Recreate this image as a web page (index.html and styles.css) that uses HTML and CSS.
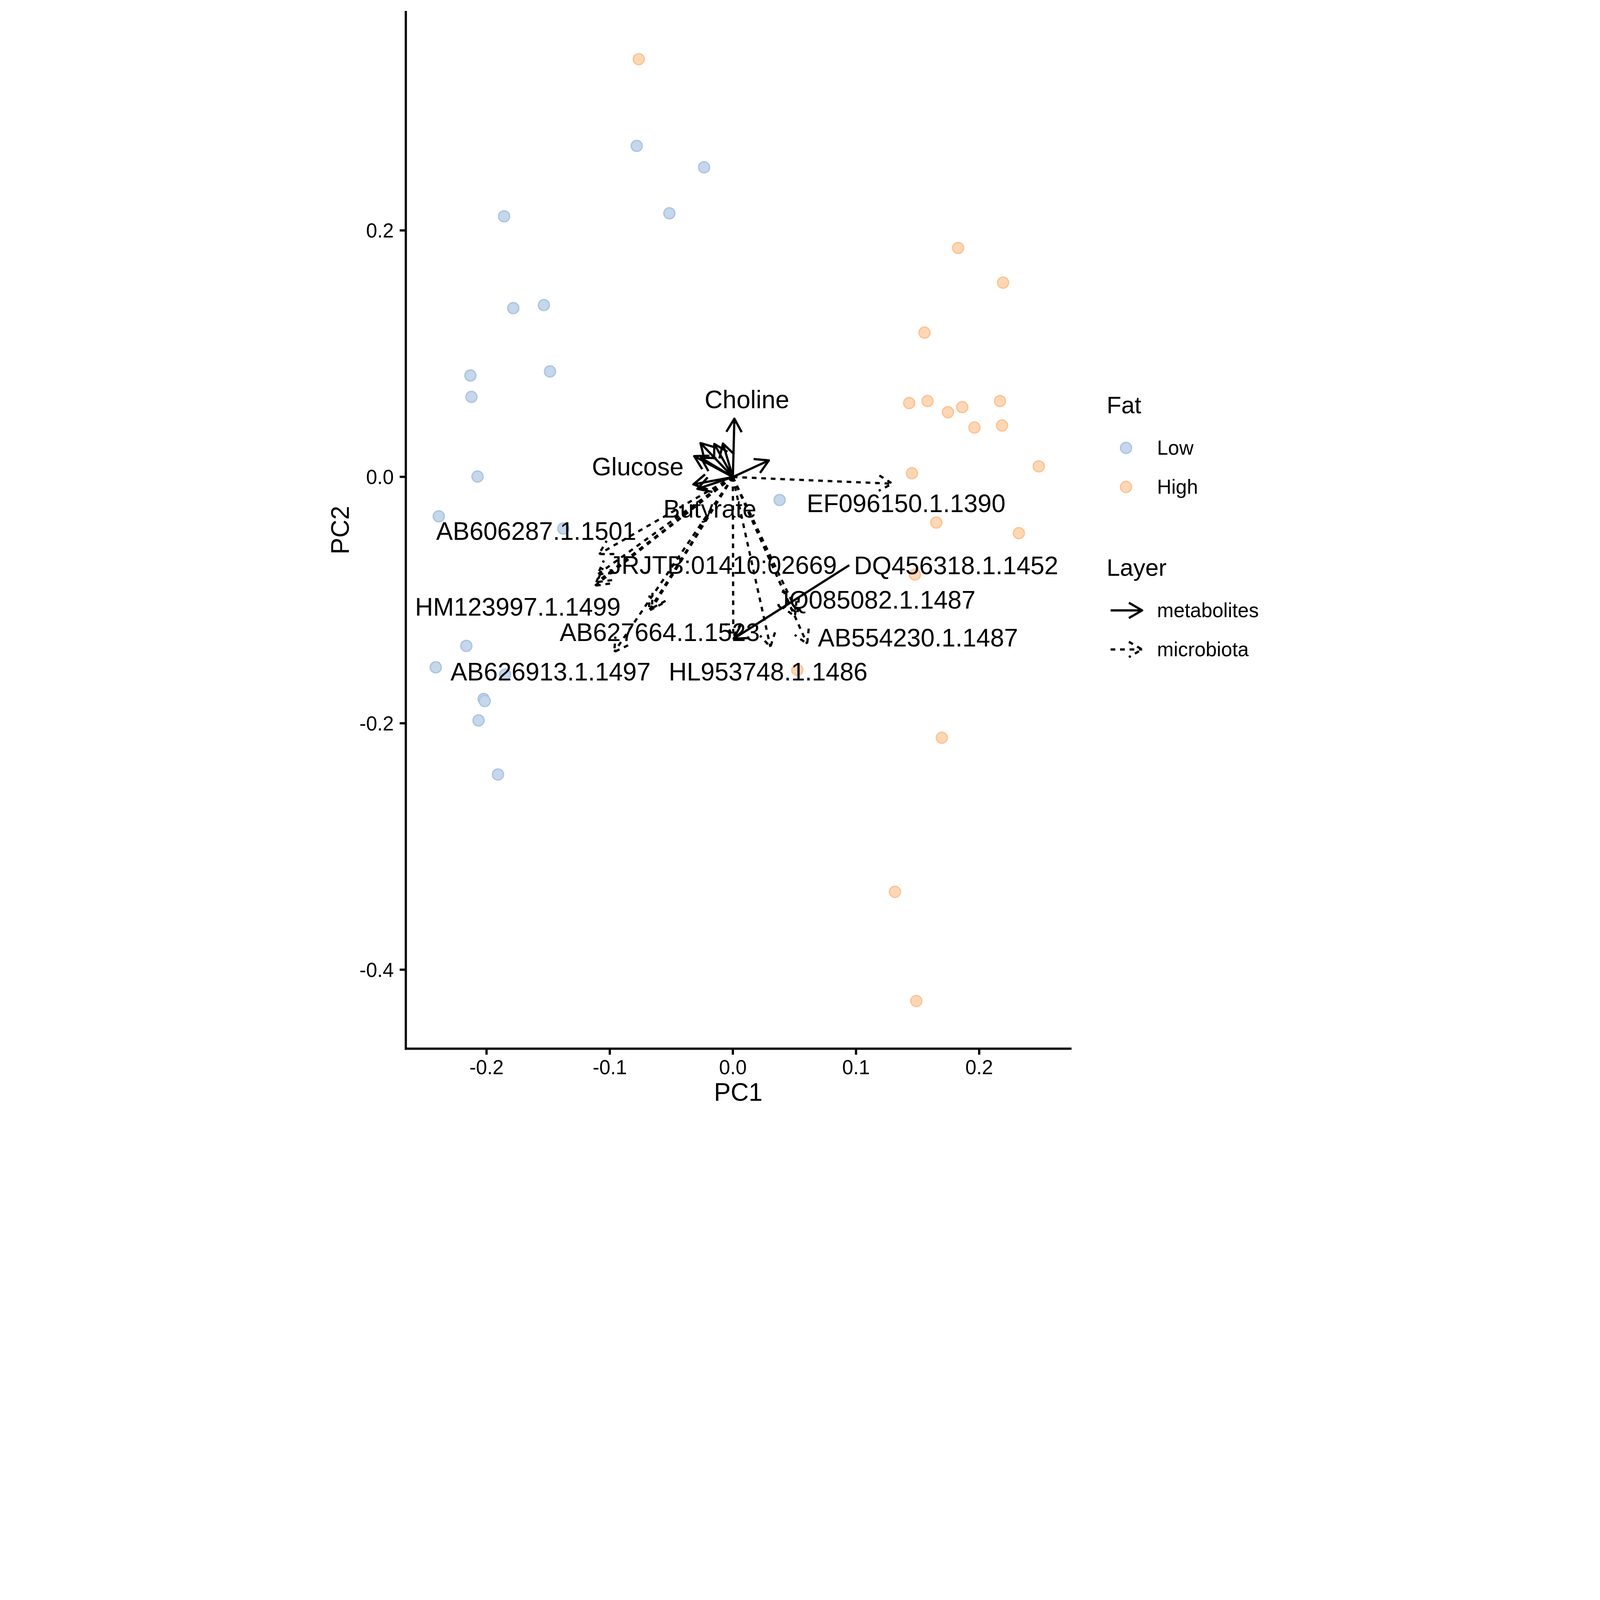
FILE: index.html
```html
<!DOCTYPE html>
<html>
<head>
<meta charset="utf-8">
<title>PCA biplot</title>
<link rel="stylesheet" href="styles.css">
</head>
<body>
<div class="figure">
  <svg class="plot" viewBox="0 0 1070 1097.6" xmlns="http://www.w3.org/2000/svg">
    <defs>
      <marker id="hs" markerUnits="userSpaceOnUse" markerWidth="40" markerHeight="40" viewBox="0 0 40 40" refX="20" refY="20" orient="auto">
        <path class="head" d="M7,12.5 L20,20 L7,27.5"/>
      </marker>
      <marker id="hd" markerUnits="userSpaceOnUse" markerWidth="40" markerHeight="40" viewBox="0 0 40 40" refX="20" refY="20" orient="auto">
        <path class="head dashed" d="M7,12.5 L20,20 L7,27.5"/>
      </marker>
    </defs>

    <!-- axes -->
    <line class="axis" x1="397.7" y1="10.7" x2="397.7" y2="1028.8"/>
    <line class="axis" x1="396.6" y1="1027.7" x2="1050.1" y2="1027.7"/>
    <g class="ticks">
      <line x1="476.8" y1="1027.7" x2="476.8" y2="1033.6"/>
      <line x1="597.6" y1="1027.7" x2="597.6" y2="1033.6"/>
      <line x1="718.2" y1="1027.7" x2="718.2" y2="1033.6"/>
      <line x1="838.9" y1="1027.7" x2="838.9" y2="1033.6"/>
      <line x1="959.6" y1="1027.7" x2="959.6" y2="1033.6"/>
      <line x1="391.7" y1="225.8" x2="397.7" y2="225.8"/>
      <line x1="391.7" y1="467.3" x2="397.7" y2="467.3"/>
      <line x1="391.7" y1="708.8" x2="397.7" y2="708.8"/>
      <line x1="391.7" y1="950.3" x2="397.7" y2="950.3"/>
    </g>
    <g class="tick-label x">
      <text x="476.8" y="1052.7">-0.2</text>
      <text x="597.6" y="1052.7">-0.1</text>
      <text x="718.2" y="1052.7">0.0</text>
      <text x="838.9" y="1052.7">0.1</text>
      <text x="959.6" y="1052.7">0.2</text>
    </g>
    <g class="tick-label y">
      <text x="385.9" y="232.8">0.2</text>
      <text x="385.9" y="474.3">0.0</text>
      <text x="385.9" y="715.8">-0.2</text>
      <text x="385.9" y="957.3">-0.4</text>
    </g>
    <text class="axis-title" x="723.5" y="1078.9">PC1</text>
    <text class="axis-title" transform="translate(341.9,519.5) rotate(-90)">PC2</text>

    <!-- points: Low -->
    <g class="pt low">
      <circle cx="624" cy="143" r="5.4"/>
      <circle cx="690" cy="164" r="5.4"/>
      <circle cx="656" cy="209" r="5.4"/>
      <circle cx="494" cy="212" r="5.4"/>
      <circle cx="503" cy="302" r="5.4"/>
      <circle cx="533" cy="299" r="5.4"/>
      <circle cx="539" cy="364" r="5.4"/>
      <circle cx="461" cy="368" r="5.4"/>
      <circle cx="462" cy="389" r="5.4"/>
      <circle cx="468" cy="467" r="5.4"/>
      <circle cx="430" cy="506" r="5.4"/>
      <circle cx="552" cy="518" r="5.4"/>
      <circle cx="764" cy="490" r="5.4"/>
      <circle cx="457" cy="633" r="5.4"/>
      <circle cx="427" cy="654" r="5.4"/>
      <circle cx="495" cy="661" r="5.4"/>
      <circle cx="474" cy="685" r="5.4"/>
      <circle cx="475" cy="687" r="5.4"/>
      <circle cx="469" cy="706" r="5.4"/>
      <circle cx="488" cy="759" r="5.4"/>
    </g>
    <!-- points: High -->
    <g class="pt high">
      <circle cx="626" cy="58" r="5.4"/>
      <circle cx="939" cy="243" r="5.4"/>
      <circle cx="983" cy="277" r="5.4"/>
      <circle cx="906" cy="326" r="5.4"/>
      <circle cx="891" cy="395" r="5.4"/>
      <circle cx="909" cy="393" r="5.4"/>
      <circle cx="929" cy="404" r="5.4"/>
      <circle cx="943" cy="399" r="5.4"/>
      <circle cx="980" cy="393" r="5.4"/>
      <circle cx="955" cy="419" r="5.4"/>
      <circle cx="982" cy="417" r="5.4"/>
      <circle cx="1018" cy="457" r="5.4"/>
      <circle cx="893.7" cy="463.8" r="5.4"/>
      <circle cx="917.6" cy="512.1" r="5.4"/>
      <circle cx="998.5" cy="522.5" r="5.4"/>
      <circle cx="896.6" cy="563.1" r="5.4"/>
      <circle cx="781.4" cy="656.5" r="5.4"/>
      <circle cx="923" cy="723" r="5.4"/>
      <circle cx="877" cy="874" r="5.4"/>
      <circle cx="898" cy="981" r="5.4"/>
    </g>

    <!-- microbiota arrows -->
    <g class="micro">
      <line x1="718.2" y1="467.5" x2="874.5" y2="474" marker-end="url(#hd)"/>
      <line x1="718.2" y1="467.5" x2="587" y2="543" marker-end="url(#hd)"/>
      <line x1="718.2" y1="467.5" x2="585.6" y2="563" marker-end="url(#hd)"/>
      <line x1="718.2" y1="467.5" x2="583" y2="574" marker-end="url(#hd)"/>
      <line x1="718.2" y1="467.5" x2="585" y2="570.5" marker-end="url(#hd)"/>
      <line x1="718.2" y1="467.5" x2="639" y2="596" marker-end="url(#hd)"/>
      <line x1="718.2" y1="467.5" x2="636" y2="598.5" marker-end="url(#hd)"/>
      <line x1="718.2" y1="467.5" x2="602" y2="638.9" marker-end="url(#hd)"/>
      <line x1="718.2" y1="467.5" x2="718.6" y2="624" marker-end="url(#hd)"/>
      <line x1="718.2" y1="467.5" x2="755" y2="634" marker-end="url(#hd)"/>
      <line x1="718.2" y1="467.5" x2="781.6" y2="601" marker-end="url(#hd)"/>
      <line x1="718.2" y1="467.5" x2="779" y2="604" marker-end="url(#hd)"/>
      <line x1="718.2" y1="467.5" x2="791" y2="631" marker-end="url(#hd)"/>
    </g>
    <!-- metabolite arrows -->
    <g class="met">
      <line x1="718.2" y1="467.5" x2="719.7" y2="410.3" marker-end="url(#hs)"/>
      <line x1="718.2" y1="467.5" x2="686.5" y2="434.2" marker-end="url(#hs)"/>
      <line x1="718.2" y1="467.5" x2="700" y2="435.1" marker-end="url(#hs)"/>
      <line x1="718.2" y1="467.5" x2="708.5" y2="434.7" marker-end="url(#hs)"/>
      <line x1="718.2" y1="467.5" x2="680.3" y2="447" marker-end="url(#hs)"/>
      <line x1="718.2" y1="467.5" x2="687" y2="448.6" marker-end="url(#hs)"/>
      <line x1="718.2" y1="467.5" x2="753.5" y2="451.2" marker-end="url(#hs)"/>
      <line x1="718.2" y1="467.5" x2="679.5" y2="474.7" marker-end="url(#hs)"/>
      <line x1="718.2" y1="467.5" x2="683.5" y2="479.1" marker-end="url(#hs)"/>
      <line x1="832.3" y1="553.9" x2="719" y2="625.9" marker-end="url(#hs)"/>
    </g>

    <!-- labels -->
    <g class="label">
      <text x="732" y="400">Choline</text>
      <text x="625" y="466">Glucose</text>
      <text x="695.7" y="507.2">Butyrate</text>
      <text x="888" y="502">EF096150.1.1390</text>
      <text x="525.5" y="529.1">AB606287.1.1501</text>
      <text x="708.5" y="562.5">JRJTB:01410:02669</text>
      <text x="937" y="562.8">DQ456318.1.1452</text>
      <text x="858.6" y="596.5">JQ085082.1.1487</text>
      <text x="507.5" y="603.4">HM123997.1.1499</text>
      <text x="646.5" y="628.2">AB627664.1.1523</text>
      <text x="899.6" y="633.6">AB554230.1.1487</text>
      <text x="539.5" y="667">AB626913.1.1497</text>
      <text x="752.8" y="667">HL953748.1.1486</text>
    </g>
  </svg>

  <div class="legend">
    <div class="legend-group">
      <div class="legend-title">Fat</div>
      <div class="legend-item">
        <svg class="key" viewBox="0 0 38 38"><circle class="pt-key low" cx="19" cy="19" r="5.4"/></svg>
        <span class="legend-label">Low</span>
      </div>
      <div class="legend-item">
        <svg class="key" viewBox="0 0 38 38"><circle class="pt-key high" cx="19" cy="19" r="5.4"/></svg>
        <span class="legend-label">High</span>
      </div>
    </div>
    <div class="legend-group">
      <div class="legend-title">Layer</div>
      <div class="legend-item">
        <svg class="key" viewBox="0 0 38 38"><line class="key-line" x1="3.9" y1="19" x2="34.8" y2="19" marker-end="url(#hs)"/></svg>
        <span class="legend-label">metabolites</span>
      </div>
      <div class="legend-item">
        <svg class="key" viewBox="0 0 38 38"><line class="key-line dashed" x1="3.9" y1="19" x2="34.8" y2="19" marker-end="url(#hd)"/></svg>
        <span class="legend-label">microbiota</span>
      </div>
    </div>
  </div>
</div>
</body>
</html>
```

FILE: styles.css
```css
:root {
  --u: min(calc(100vw / 1568), calc(100vh / 1097.6));
}

html, body {
  margin: 0;
  padding: 0;
  background: #ffffff;
}

body {
  overflow: hidden;
}

.figure {
  width: calc(var(--u) * 1568);
  height: calc(var(--u) * 1097.6);
  display: flex;
  font-family: "Liberation Sans", Arial, sans-serif;
  color: #000000;
}

.plot {
  flex: none;
  display: block;
  width: calc(var(--u) * 1070);
  height: calc(var(--u) * 1097.6);
  overflow: visible;
}

.plot text {
  font-family: "Liberation Sans", Arial, sans-serif;
  fill: #000000;
}

.axis {
  stroke: #000000;
  stroke-width: 2.2;
  stroke-linecap: butt;
}

.ticks line {
  stroke: #000000;
  stroke-width: 2.2;
}

.tick-label text {
  font-size: 19.5px;
}

.tick-label.x text {
  text-anchor: middle;
}

.tick-label.y text {
  text-anchor: end;
}

.axis-title {
  font-size: 24.5px;
  text-anchor: middle;
}

.pt.low circle,
.pt-key.low {
  fill: #c6d7eb;
  stroke: #abc5e3;
  stroke-width: 1.3;
}

.pt.high circle,
.pt-key.high {
  fill: #fed7b6;
  stroke: #fec392;
  stroke-width: 1.3;
}

.met line,
.micro line,
.key-line {
  stroke: #000000;
  stroke-width: 2.2;
  fill: none;
}

.micro line,
.key-line.dashed {
  stroke-dasharray: 4.6 4.7;
}

.head {
  fill: none;
  stroke: #000000;
  stroke-width: 2.2;
  stroke-linejoin: round;
}

.head.dashed {
  stroke-dasharray: 4.6 4.7;
}

.label text {
  font-size: 24.5px;
  text-anchor: middle;
}

.legend {
  flex: none;
  align-self: flex-start;
  margin-top: calc(var(--u) * 383.5);
  margin-left: calc(var(--u) * 14.5);
  display: flex;
  flex-direction: column;
  gap: calc(var(--u) * 46.7);
}

.legend-group {
  display: flex;
  flex-direction: column;
}

.legend-title {
  font-size: calc(var(--u) * 23.5);
  line-height: calc(var(--u) * 27);
  margin-bottom: calc(var(--u) * 9.6);
}

.legend-item {
  display: flex;
  align-items: center;
  height: calc(var(--u) * 38);
}

.key {
  flex: none;
  display: block;
  width: calc(var(--u) * 38);
  height: calc(var(--u) * 38);
  overflow: visible;
}

.legend-label {
  margin-left: calc(var(--u) * 11.4);
  font-size: calc(var(--u) * 19.5);
  line-height: calc(var(--u) * 22);
  white-space: nowrap;
}
```
